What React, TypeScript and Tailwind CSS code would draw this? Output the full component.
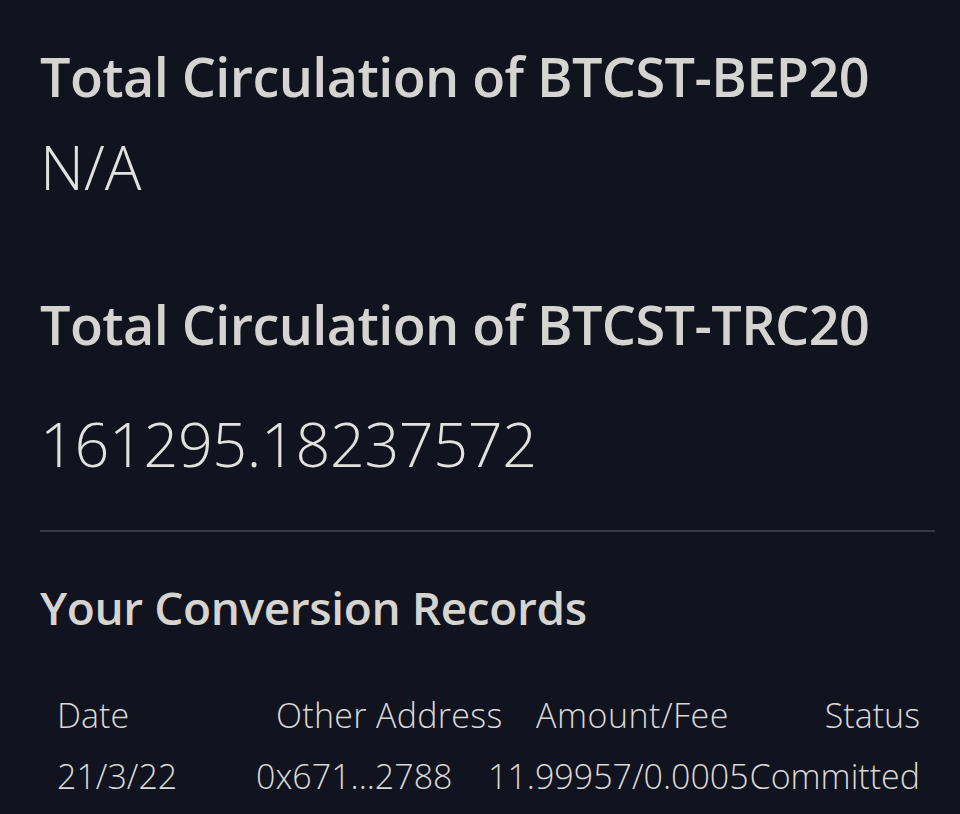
export default function App() {
  return (
    <main className="min-h-screen w-full bg-[#11131f] text-[#d6d4d1] font-['Open_Sans',sans-serif] px-10 overflow-hidden">
      <h2 className="pt-[41px] text-[54px] font-semibold leading-[70px] tracking-[-0.6px]">
        Total Circulation of BTCST-BEP20
      </h2>
      <p className="mt-[16px] text-[61px] font-light leading-[80px] text-[#e2e1de]">N/A</p>

      <h2 className="mt-[82px] text-[54px] font-semibold leading-[70px] tracking-[-0.6px]">
        Total Circulation of BTCST-TRC20
      </h2>
      <p className="mt-[45px] text-[61px] font-light leading-[80px] tracking-[-0.35px] text-[#e2e1de]">
        161295.18237572
      </p>

      <div className="mt-[46px] h-[2px] w-[895px] bg-[#363946]" />

      <h3 className="mt-[45px] text-[46px] font-semibold leading-[60px] tracking-[-0.4px]">
        Your Conversion Records
      </h3>

      <div className="mt-[48px] w-[880px] text-[34px] font-light leading-[61px] text-[#d9d8d5]">
        <div className="flex items-center pl-[17px]">
          <span className="w-[219px]">Date</span>
          <span className="w-[260px] tracking-[0.3px]">Other Address</span>
          <span className="tracking-[0.5px]">Amount/Fee</span>
          <span className="ml-auto">Status</span>
        </div>
        <div className="flex items-center pl-[17px]">
          <span className="w-[199px]">21/3/22</span>
          <span className="w-[232px]">0x671...2788</span>
          <span>11.99957/0.0005</span>
          <span className="ml-auto">Committed</span>
        </div>
      </div>
    </main>
  );
}
